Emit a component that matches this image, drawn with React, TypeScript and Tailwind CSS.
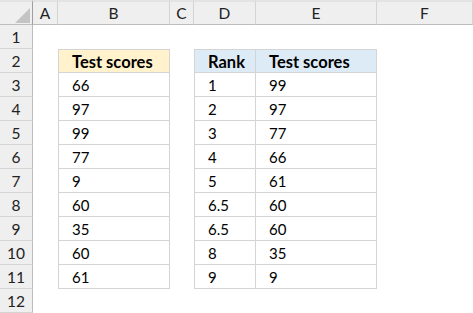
import React from 'react';

const cols = ['A', 'B', 'C', 'D', 'E', 'F'];
const scoresB = ['66', '97', '99', '77', '9', '60', '35', '60', '61'];
const ranked: [string, string][] = [
  ['1', '99'],
  ['2', '97'],
  ['3', '77'],
  ['4', '66'],
  ['5', '61'],
  ['6.5', '60'],
  ['6.5', '60'],
  ['8', '35'],
  ['9', '9'],
];

const Cell: React.FC<{ className?: string; children?: React.ReactNode }> = ({ className = '', children }) => (
  <div className={`flex items-center pt-[2px] pl-[13px] text-[15px] text-black ${className}`}>{children}</div>
);

export default function App() {
  const rows = Array.from({ length: 12 }, (_, i) => i + 1);

  return (
    <div className="w-[473px] h-[313px] overflow-hidden bg-white" style={{ fontFamily: 'Lato, "Open Sans", sans-serif' }}>
      <div className="grid grid-cols-[33px_25px_112px_24px_62px_121px_1fr] grid-rows-[25px_repeat(12,24px)]">
        {/* corner */}
        <div className="relative bg-[#efefef] border-t-2 border-t-[#e3e3e3] border-r border-r-[#9f9f9f] border-b border-b-[#bdbdbd]">
          <svg className="absolute left-0 top-0" width="33" height="25" viewBox="0 0 33 25">
            <polygon points="30,6 30,21 15,21" fill="#c4c4c4" />
          </svg>
        </div>
        {cols.map((c) => (
          <div
            key={c}
            className="flex items-center justify-center pt-[1px] bg-[#efefef] border-t-2 border-t-[#e3e3e3] border-r border-r-[#d4d4d4] border-b border-b-[#bdbdbd] text-[15.5px] text-[#222]"
          >
            {c}
          </div>
        ))}

        {rows.map((r) => {
          const cells: React.ReactNode[] = [];
          cells.push(
            <div
              key={`h${r}`}
              className="flex items-center justify-center pt-[2px] bg-[#efefef] border-r border-r-[#bdbdbd] border-b border-b-[#d4d4d4] text-[15.5px] text-[#222]"
            >
              {r}
            </div>
          );
          cells.push(<div key={`a${r}`} />);
          if (r === 2) {
            cells.push(
              <Cell key={`b${r}`} className="font-bold !text-[16.5px] bg-[#fff2cc] border border-[#d4d4d4]">
                Test scores
              </Cell>
            );
          } else if (r >= 3 && r <= 11) {
            cells.push(
              <Cell key={`b${r}`} className="border-x border-b border-[#d4d4d4]">
                {scoresB[r - 3]}
              </Cell>
            );
          } else {
            cells.push(<div key={`b${r}`} />);
          }
          cells.push(<div key={`c${r}`} />);
          if (r === 2) {
            cells.push(
              <Cell key={`d${r}`} className="font-bold !text-[16.5px] bg-[#ddebf7] border border-[#d4d4d4]">
                Rank
              </Cell>
            );
            cells.push(
              <Cell key={`e${r}`} className="font-bold !text-[16.5px] bg-[#ddebf7] border-y border-r border-[#d4d4d4]">
                Test scores
              </Cell>
            );
          } else if (r >= 3 && r <= 11) {
            cells.push(
              <Cell key={`d${r}`} className="border-x border-b border-[#d4d4d4]">
                {ranked[r - 3][0]}
              </Cell>
            );
            cells.push(
              <Cell key={`e${r}`} className="border-r border-b border-[#d4d4d4]">
                {ranked[r - 3][1]}
              </Cell>
            );
          } else {
            cells.push(<div key={`d${r}`} />);
            cells.push(<div key={`e${r}`} />);
          }
          cells.push(<div key={`f${r}`} />);
          return cells;
        })}
      </div>
    </div>
  );
}
